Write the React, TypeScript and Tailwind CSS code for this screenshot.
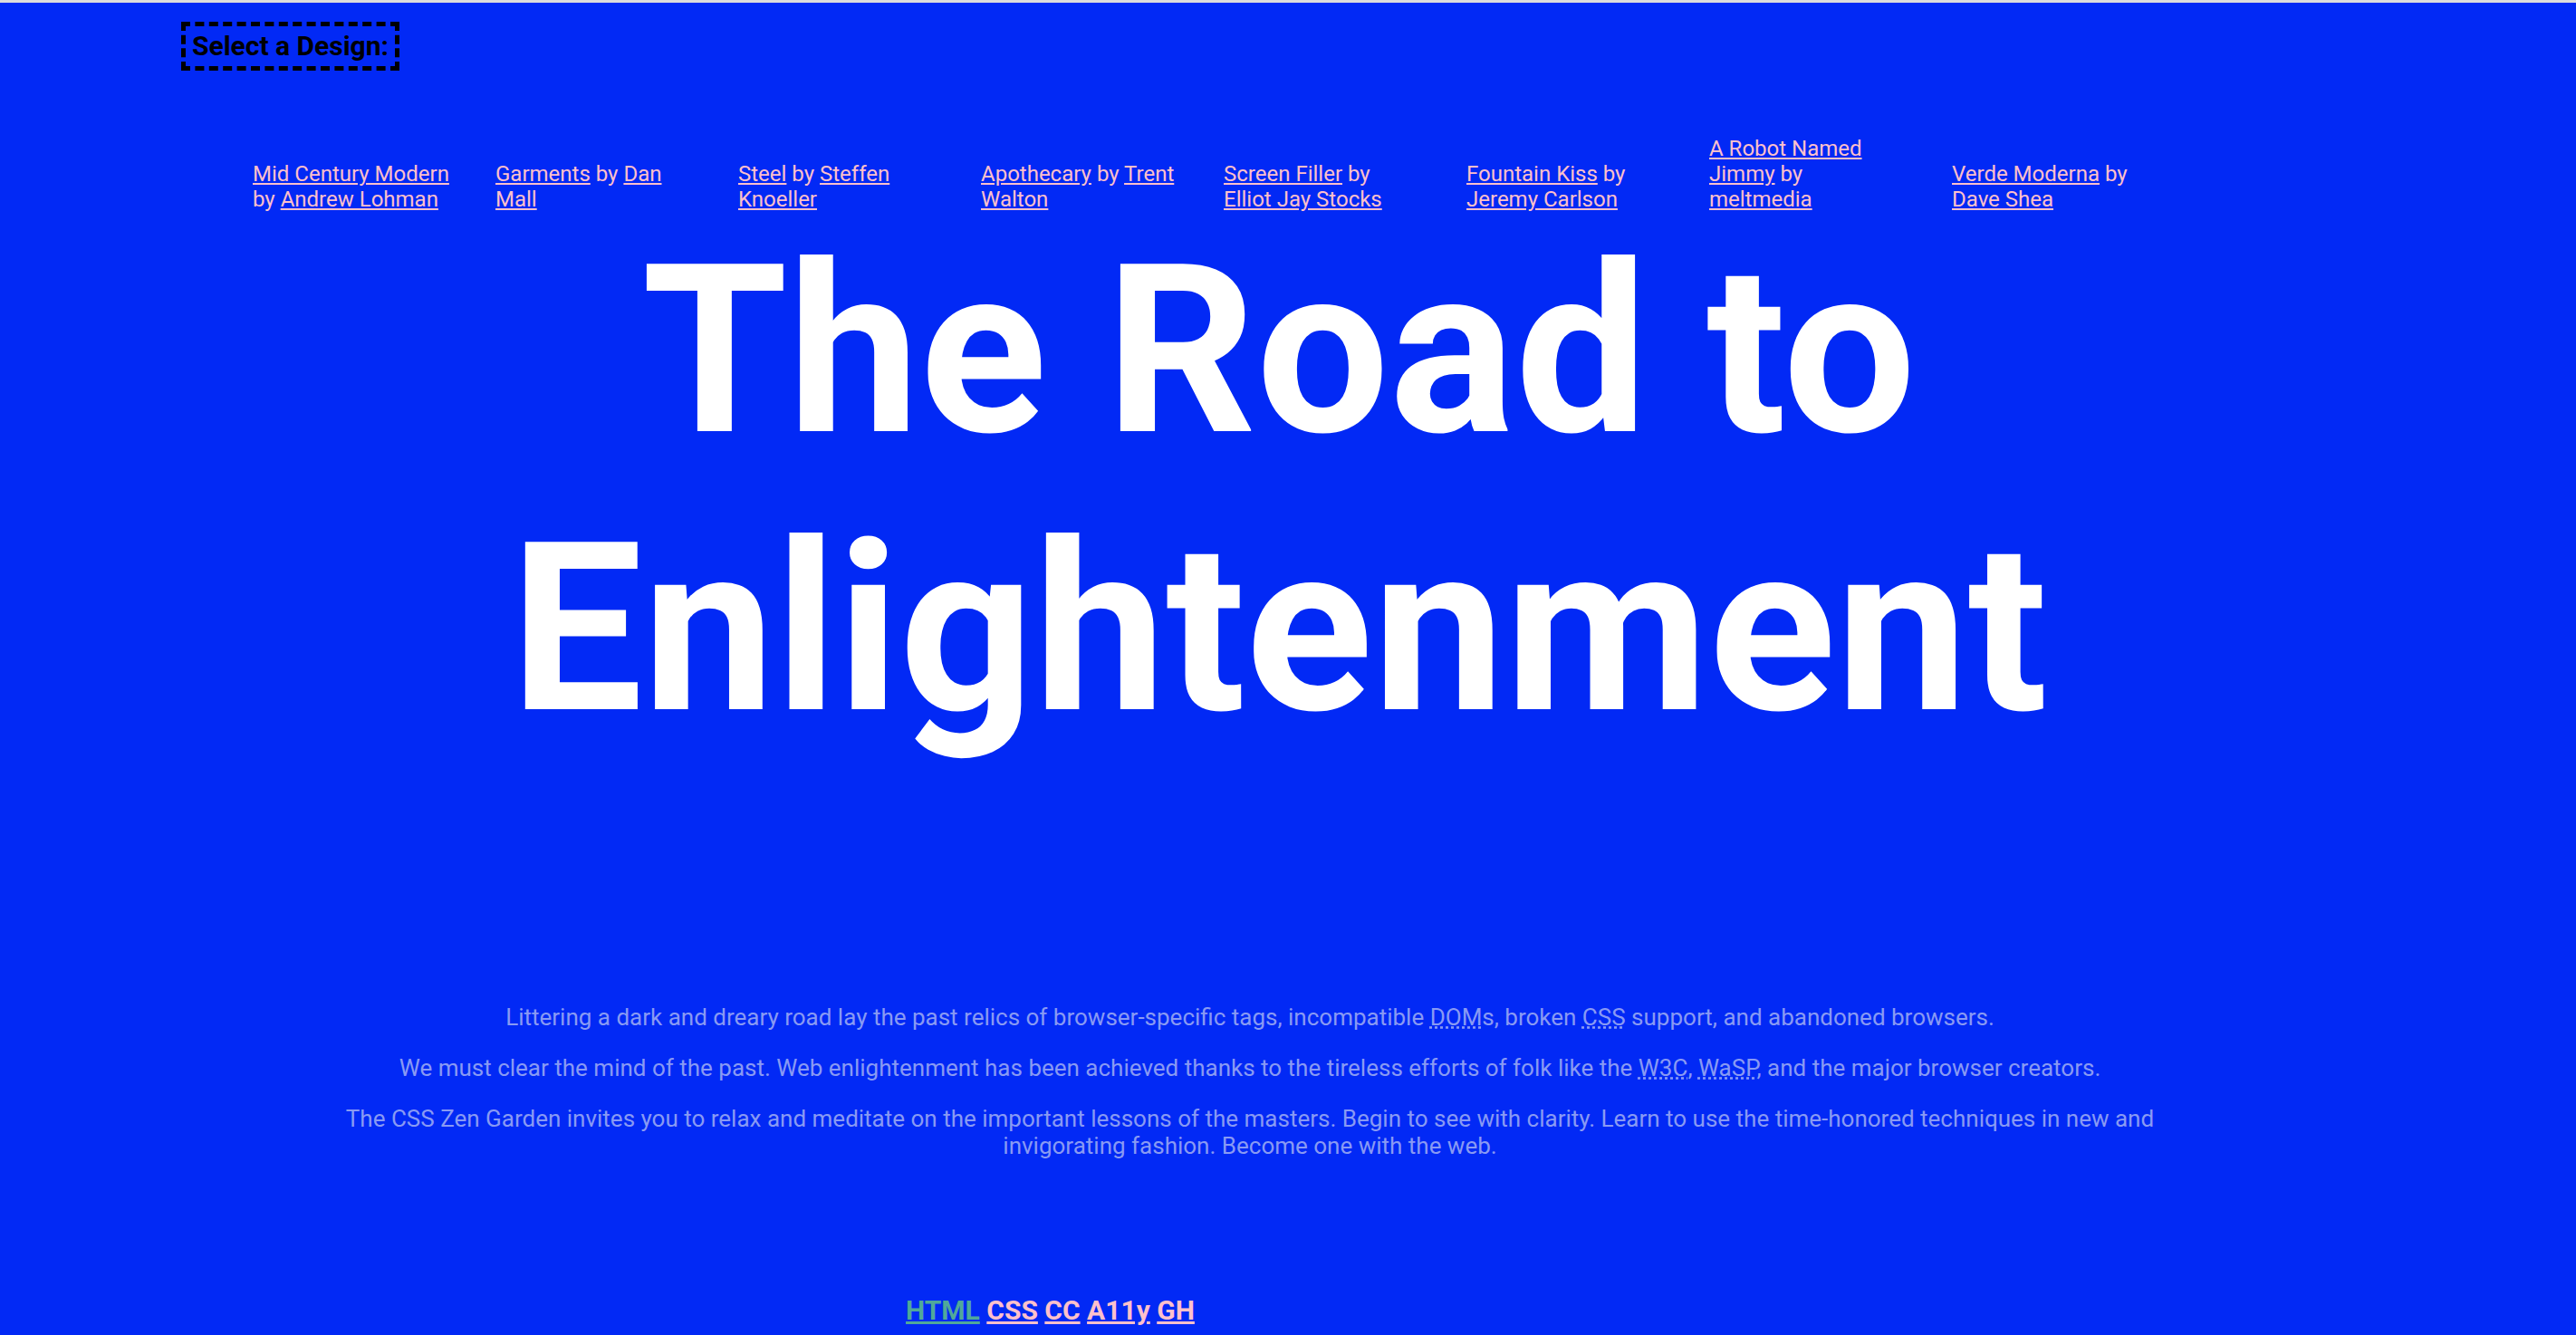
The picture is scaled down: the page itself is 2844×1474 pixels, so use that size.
import React from "react";

const designs = [
  { name: "Mid Century Modern", author: "Andrew Lohman" },
  { name: "Garments", author: "Dan Mall" },
  { name: "Steel", author: "Steffen Knoeller" },
  { name: "Apothecary", author: "Trent Walton" },
  { name: "Screen Filler", author: "Elliot Jay Stocks" },
  { name: "Fountain Kiss", author: "Jeremy Carlson" },
  { name: "A Robot Named Jimmy", author: "meltmedia" },
  { name: "Verde Moderna", author: "Dave Shea" },
];

const footerLinks = ["HTML", "CSS", "CC", "A11y", "GH"];

export default function App() {
  return (
    <div className="min-h-screen bg-[#0229f5] border-t-[3px] border-[#dcdcdc] font-['Roboto',sans-serif] overflow-hidden">
      <div className="ml-[200px] mt-[21px] inline-block border-[5px] border-dashed border-black px-[7px] py-[4px]">
        <h3 className="text-[30px] leading-[36px] font-bold text-black">Select a Design:</h3>
      </div>

      <nav className="mt-[72px] ml-[279px]">
        <ul className="flex items-end">
          {designs.map((d) => (
            <li key={d.name} className="w-[268px] shrink-0 pr-[50px] text-[24px] leading-[28px] text-[#ffc0cb]">
              <a href="#" className="underline">{d.name}</a> by{" "}
              <a href="#" className="underline">{d.author}</a>
            </li>
          ))}
        </ul>
      </nav>

      <h1 className="text-center pr-[20px] text-[260px] leading-[1.18] font-bold text-white">
        The Road to Enlightenment
      </h1>

      <div className="mt-[260px] ml-[330px] w-[2100px] text-center text-[26px] leading-[30px] text-[#899af3]">
        <p className="mb-[26px]">
          Littering a dark and dreary road lay the past relics of browser-specific tags, incompatible{" "}
          <abbr title="Document Object Model">DOM</abbr>s, broken{" "}
          <abbr title="Cascading Style Sheets">CSS</abbr> support, and abandoned browsers.
        </p>
        <p className="mb-[26px]">
          We must clear the mind of the past. Web enlightenment has been achieved thanks to the tireless efforts of folk like the{" "}
          <abbr title="World Wide Web Consortium">W3C</abbr>,{" "}
          <abbr title="Web Standards Project">WaSP</abbr>, and the major browser creators.
        </p>
        <p>
          The CSS Zen Garden invites you to relax and meditate on the important lessons of the masters. Begin to see with clarity. Learn to use the time-honored techniques in new and invigorating fashion. Become one with the web.
        </p>
      </div>

      <footer className="mt-[148px] ml-[1000px] text-[30px] leading-[37px] font-bold">
        {footerLinks.map((l, i) => (
          <React.Fragment key={l}>
            <a href="#" className={`underline ${i === 0 ? "text-[#50a89a]" : "text-[#ffc0cb]"}`}>
              {l}
            </a>{" "}
          </React.Fragment>
        ))}
      </footer>
    </div>
  );
}
